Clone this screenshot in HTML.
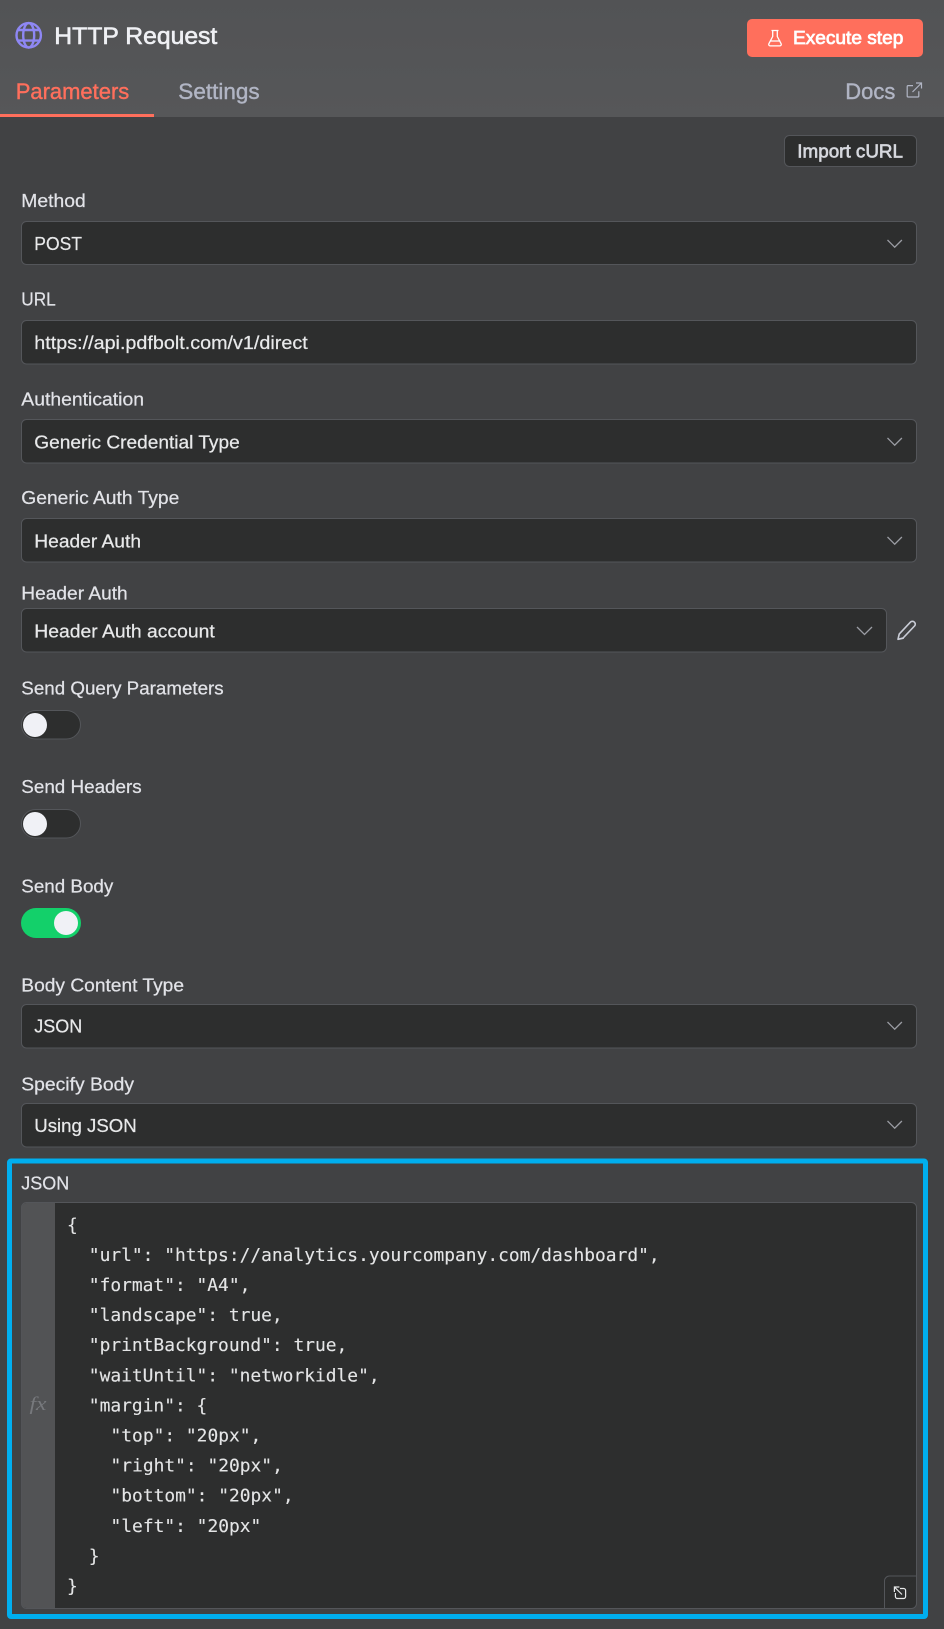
<!DOCTYPE html>
<html lang="en">
<head>
<meta charset="utf-8">
<title>HTTP Request</title>
<style>
html,body{margin:0;padding:0;background:#414244;width:944px;height:1629px;overflow:hidden}
svg{display:block}
text{font-family:"Liberation Sans",Arial,sans-serif;white-space:pre}
.l{font-size:18px;fill:#e2e3e8;stroke:#e2e3e8;stroke-width:.22}
.v{font-size:18px;fill:#e8e9ea;stroke:#e8e9ea;stroke-width:.22}
.c{font-family:"DejaVu Sans Mono",monospace;font-size:17.9px;fill:#e4e5e6;stroke:#e4e5e6;stroke-width:.12}
.box{fill:#2d2e2e;stroke:#54565a;stroke-width:1}
.chev{fill:none;stroke:#9b9da4;stroke-width:1.3}
</style>
</head>
<body>
<svg xmlns="http://www.w3.org/2000/svg" width="944" height="1629" viewBox="0 0 944 1629">
<defs>
<linearGradient id="hg" x1="0" y1="0" x2="0" y2="1"><stop offset="0" stop-color="#525355"/><stop offset="1" stop-color="#565759"/></linearGradient>
</defs>
<rect width="944" height="1629" fill="#414244"/>
<rect width="944" height="117" fill="url(#hg)"/>

<!-- globe -->
<g fill="none" stroke="#8e87f4" stroke-width="2.4">
<circle cx="28.7" cy="35.3" r="12.2"/>
<ellipse cx="28.7" cy="35.3" rx="5.5" ry="12.2"/>
<path d="M17.5 30h22.4M17.5 40.6h22.4"/>
</g>
<text x="54.3" y="44" font-size="24" fill="#eff0f4" stroke="#eff0f4" stroke-width=".6" textLength="163" lengthAdjust="spacingAndGlyphs">HTTP Request</text>

<!-- execute -->
<rect x="747" y="19" width="176" height="38" rx="5" fill="#ff6f5c"/>
<path d="M771.5 30.5h7M772.7 30.5v6l-3.8 7.2c-.5 1 .1 2.2 1.3 2.2h9.6c1.2 0 1.8-1.2 1.3-2.2l-3.8-7.2v-6M770.6 41h9.8" fill="none" stroke="#fff" stroke-width="1.3" stroke-linejoin="round"/>
<text x="793" y="44" font-size="18.5" fill="#fff" stroke="#fff" stroke-width=".75" textLength="110.3" lengthAdjust="spacingAndGlyphs">Execute step</text>

<!-- tabs -->
<text x="15.7" y="99" font-size="22" fill="#ff6f5c" stroke="#ff6f5c" stroke-width=".4" textLength="113.6" lengthAdjust="spacingAndGlyphs">Parameters</text>
<text x="178.3" y="99" font-size="22" fill="#b1b5c4" stroke="#b1b5c4" stroke-width=".4" textLength="81.4" lengthAdjust="spacingAndGlyphs">Settings</text>
<rect x="0" y="114" width="154" height="3" fill="#ff6f5c"/>
<text x="845.3" y="99" font-size="22" fill="#b1b5c4" stroke="#b1b5c4" stroke-width=".4" textLength="50" lengthAdjust="spacingAndGlyphs">Docs</text>
<path d="M913 85.6h-4.8a1 1 0 0 0-1 1v9.4a1 1 0 0 0 1 1h9.6a1 1 0 0 0 1-1v-4.8M916 83h5.5v5.5M921.5 83l-9 9" fill="none" stroke="#b1b5c4" stroke-width="1.2"/>

<!-- import -->
<rect x="784.5" y="135.5" width="132" height="31" rx="5" class="box"/>
<text x="797.3" y="157.3" font-size="18.5" fill="#d6d8de" stroke="#d6d8de" stroke-width=".65" textLength="105.7" lengthAdjust="spacingAndGlyphs">Import cURL</text>

<!-- Method -->
<text x="21.3" y="207" class="l" textLength="64.4" lengthAdjust="spacingAndGlyphs">Method</text>
<rect x="21.5" y="221.5" width="895" height="43" rx="5" class="box"/>
<text x="34.3" y="250" class="v" textLength="47.7" lengthAdjust="spacingAndGlyphs">POST</text>
<path d="M887.5 240l7.2 7.2 7.2-7.2" class="chev"/>

<!-- URL -->
<text x="21.3" y="305.7" class="l" textLength="34.4" lengthAdjust="spacingAndGlyphs">URL</text>
<rect x="21.5" y="320.5" width="895" height="43.5" rx="5" class="box"/>
<text x="34.3" y="348.8" class="v" textLength="273.4" lengthAdjust="spacingAndGlyphs">https://api.pdfbolt.com/v1/direct</text>

<!-- Authentication -->
<text x="21.3" y="405.3" class="l" textLength="122.7" lengthAdjust="spacingAndGlyphs">Authentication</text>
<rect x="21.5" y="419.5" width="895" height="43.5" rx="5" class="box"/>
<text x="34.3" y="448.3" class="v" textLength="205.4" lengthAdjust="spacingAndGlyphs">Generic Credential Type</text>
<path d="M887.5 438l7.2 7.2 7.2-7.2" class="chev"/>

<!-- Generic Auth Type -->
<text x="21.3" y="504" class="l" textLength="158" lengthAdjust="spacingAndGlyphs">Generic Auth Type</text>
<rect x="21.5" y="518.5" width="895" height="43.5" rx="5" class="box"/>
<text x="34.3" y="547.3" class="v" textLength="106.7" lengthAdjust="spacingAndGlyphs">Header Auth</text>
<path d="M887.5 537l7.2 7.2 7.2-7.2" class="chev"/>

<!-- Header Auth -->
<text x="21.3" y="599.3" class="l" textLength="106.4" lengthAdjust="spacingAndGlyphs">Header Auth</text>
<rect x="21.5" y="608.5" width="865" height="43.5" rx="5" class="box"/>
<text x="34.3" y="637.3" class="v" textLength="180.4" lengthAdjust="spacingAndGlyphs">Header Auth account</text>
<path d="M857 627l7.5 7.5 7.5-7.5" class="chev"/>
<path d="M898 639.3l1.2-5.2 11.3-12a2.6 2.6 0 0 1 3.8 0l.2.2a2.6 2.6 0 0 1 0 3.7l-11.4 12z M898 639.3l5.8-1.2" fill="none" stroke="#c9ccd6" stroke-width="1.6" stroke-linejoin="round"/>

<!-- Toggles -->
<text x="21.3" y="694.3" class="l" textLength="202.4" lengthAdjust="spacingAndGlyphs">Send Query Parameters</text>
<rect x="21.5" y="710.5" width="59" height="28.5" rx="14.25" class="box"/>
<circle cx="35" cy="725" r="12" fill="#f0f1f6"/>

<text x="21.3" y="793" class="l" textLength="120.4" lengthAdjust="spacingAndGlyphs">Send Headers</text>
<rect x="21.5" y="809.5" width="59" height="28.5" rx="14.25" class="box"/>
<circle cx="35" cy="824" r="12" fill="#f0f1f6"/>

<text x="21.3" y="892.3" class="l" textLength="92" lengthAdjust="spacingAndGlyphs">Send Body</text>
<rect x="21" y="908" width="60" height="30" rx="15" fill="#13d06a"/>
<circle cx="66" cy="923" r="12" fill="#f0f1f6"/>

<!-- Body Content Type -->
<text x="21.3" y="991.3" class="l" textLength="162.7" lengthAdjust="spacingAndGlyphs">Body Content Type</text>
<rect x="21.5" y="1004.5" width="895" height="43.5" rx="5" class="box"/>
<text x="34.3" y="1032.7" class="v" textLength="48" lengthAdjust="spacingAndGlyphs">JSON</text>
<path d="M887.5 1022l7.2 7.2 7.2-7.2" class="chev"/>

<!-- Specify Body -->
<text x="21.3" y="1090.3" class="l" textLength="112.7" lengthAdjust="spacingAndGlyphs">Specify Body</text>
<rect x="21.5" y="1103.5" width="895" height="43.5" rx="5" class="box"/>
<text x="34.3" y="1132" class="v" textLength="102.4" lengthAdjust="spacingAndGlyphs">Using JSON</text>
<path d="M887.5 1121l7.2 7.2 7.2-7.2" class="chev"/>

<!-- Blue highlight -->
<rect x="9.5" y="1161" width="916" height="455.5" rx="1.5" fill="none" stroke="#00aeef" stroke-width="5"/>

<!-- JSON -->
<text x="21.3" y="1189.3" class="l" textLength="48" lengthAdjust="spacingAndGlyphs">JSON</text>
<rect x="21.5" y="1202.5" width="895" height="406" rx="5" class="box"/>
<path d="M55 1203H26.5a5 5 0 0 0-5 5V1603a5 5 0 0 0 5 5H55z" fill="#525355"/>
<text x="29.5" y="1410" style="font-family:'Liberation Serif',serif" font-style="italic" font-size="19" fill="#77797d" textLength="17" lengthAdjust="spacingAndGlyphs">fx</text>

<text class="c" x="67" y="1230.8">{</text>
<text class="c" x="88.8" y="1260.9">"url": "https://analytics.yourcompany.com/dashboard",</text>
<text class="c" x="88.8" y="1291">"format": "A4",</text>
<text class="c" x="88.8" y="1321.1">"landscape": true,</text>
<text class="c" x="88.8" y="1351.2">"printBackground": true,</text>
<text class="c" x="88.8" y="1381.3">"waitUntil": "networkidle",</text>
<text class="c" x="88.8" y="1411.4">"margin": {</text>
<text class="c" x="110.5" y="1441.5">"top": "20px",</text>
<text class="c" x="110.5" y="1471.6">"right": "20px",</text>
<text class="c" x="110.5" y="1501.7">"bottom": "20px",</text>
<text class="c" x="110.5" y="1531.8">"left": "20px"</text>
<text class="c" x="88.8" y="1561.9">}</text>
<text class="c" x="67" y="1592">}</text>

<!-- resize button -->
<path d="M884.5 1608.5V1581a5 5 0 0 1 5-5h27" fill="#2d2e2e" stroke="#54565a" stroke-width="1"/>
<path d="M900 1588.5h3.6a2 2 0 0 1 2 2v6a2 2 0 0 1-2 2h-6.2a2 2 0 0 1-2-2V1593M902 1594.5l-7.6-7.4M894.4 1592v-5h5" fill="none" stroke="#e6e7e8" stroke-width="1.2"/>
</svg>
</body>
</html>
